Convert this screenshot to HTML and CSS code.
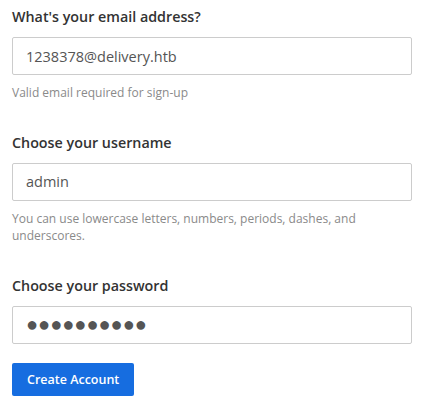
FILE: index.html
```html
<!DOCTYPE html>
<html>
<head>
<meta charset="utf-8">
<link rel="stylesheet" href="styles.css">
</head>
<body>
<form class="signup">
  <div class="field">
    <label class="label">What's your email address?</label>
    <input class="input" type="text" value="1238378@delivery.htb">
    <div class="help">Valid email required for sign-up</div>
  </div>
  <div class="field">
    <label class="label">Choose your username</label>
    <input class="input" type="text" value="admin">
    <div class="help">You can use lowercase letters, numbers, periods, dashes, and underscores.</div>
  </div>
  <div class="field last">
    <label class="label">Choose your password</label>
    <input class="input masked" type="text" value="●●●●●●●●●●">
  </div>
  <button type="button" class="btn">Create Account</button>
</form>
</body>
</html>
```
FILE: styles.css
```css
html, body {
  margin: 0;
  padding: 0;
  background: #fff;
}
body {
  font-family: "Open Sans", "Liberation Sans", sans-serif;
  color: #3d3c40;
}
.signup {
  padding: 7px 10px 0 12px;
  display: flex;
  flex-direction: column;
  align-items: flex-start;
}
.field {
  width: 400px;
  display: flex;
  flex-direction: column;
  margin-bottom: 31px;
}
.field.last {
  margin-bottom: 19px;
}
.label {
  font-size: 14.3px;
  font-weight: 600;
  line-height: 20px;
  margin-bottom: 10px;
  color: #333;
}
.input {
  box-sizing: border-box;
  width: 400px;
  height: 38px;
  border: 1px solid #ccc;
  border-radius: 2px;
  padding: 0 13px;
  font-family: "Open Sans", "Liberation Sans", sans-serif;
  font-size: 14.5px;
  color: #555;
  outline: none;
  margin: 0;
}
.input.masked {
  font-family: "Liberation Sans", sans-serif;
  font-size: 20px;
}
.help {
  font-size: 12px;
  line-height: 17.5px;
  color: #8a8a8a;
  margin-top: 9px;
}
.btn {
  background: #166de0;
  color: #fff;
  border: none;
  border-radius: 2px;
  height: 33px;
  padding: 0 15px;
  font-family: "Open Sans", "Liberation Sans", sans-serif;
  font-size: 12.5px;
  font-weight: 600;
  white-space: nowrap;
}
```
